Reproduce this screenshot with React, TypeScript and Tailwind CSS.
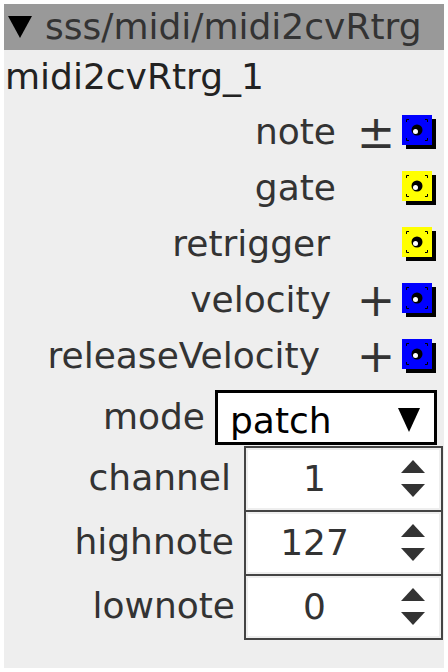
import React from "react";

const font = { fontFamily: '"DejaVu Sans", sans-serif' };

function Port({ color }: { color: "blue" | "yellow" }) {
  const fill = color === "blue" ? "#0000ff" : "#ffff00";
  return (
    <svg width="34" height="34" viewBox="0 0 34 34" className="block">
      <rect x="4" y="4" width="30" height="30" fill="#000" />
      <rect x="0" y="0" width="30" height="30" fill={fill} />
      <g fill="none" stroke="#000" strokeWidth="1">
        <path d="M4.5 7V4.5H7" />
        <path d="M23 4.5H25.5V7" />
        <path d="M4.5 23V25.5H7" />
        <path d="M23 25.5H25.5V23" />
      </g>
      <circle cx="15" cy="15" r="5.5" fill="#000" />
      <circle cx="13.5" cy="16.5" r="2.5" fill="#fff" />
    </svg>
  );
}

function PortRow({ label, sign, color, shift }: { label: string; sign: string; color: "blue" | "yellow"; shift: string }) {
  return (
    <div className="flex h-[56px] items-center justify-end pr-[8px]">
      <span className={`text-[36px] leading-none text-[#333] ${shift}`}>{label}</span>
      <span className="ml-[15px] flex w-[50px] justify-center text-[46px] leading-none text-[#333]">{sign}</span>
      <div className="ml-[1px]">
        <Port color={color} />
      </div>
    </div>
  );
}

function Spinner() {
  return (
    <svg width="24" height="38" viewBox="0 0 24 38" className="block">
      <polygon points="12,0 24,13 0,13" fill="#333" />
      <polygon points="0,24 24,24 12,37" fill="#333" />
    </svg>
  );
}

function NumRow({ label, value, pr }: { label: string; value: string; pr: string }) {
  return (
    <div className="flex h-[64px] items-center">
      <div className={`w-[240px] text-right text-[36px] leading-none text-[#333] ${pr}`}>{label}</div>
      <div className="-mb-[2px] flex h-[66px] w-[199px] border-2 border-[#444] bg-[#eee] p-[2px]">
        <div className="flex flex-1 items-center bg-white">
          <div className="flex-1 pl-[2px] text-center text-[36px] leading-none text-[#333]">{value}</div>
          <div className="flex w-[60px] justify-center pl-[8px]">
            <Spinner />
          </div>
        </div>
      </div>
    </div>
  );
}

export default function App() {
  return (
    <div className="h-[672px] w-[448px] bg-white p-[4px]" style={font}>
      <div className="h-[664px] w-[440px] bg-[#eeeeee]">
        <div className="flex h-[46px] items-center bg-[#999999] pl-[4px] text-[36px] leading-none text-[#333]">
          <svg width="24" height="22" viewBox="0 0 24 22" className="block">
            <polygon points="0,0 24,0 12,22" fill="#000" />
          </svg>
          <span className="ml-[13px]">sss/midi/midi2cvRtrg</span>
        </div>
        <div className="flex h-[54px] items-center pl-[1px] text-[36px] leading-none text-[#222]">midi2cvRtrg_1</div>
        <PortRow label="note" sign="±" color="blue" shift="mr-0" />
        <PortRow label="gate" sign="" color="yellow" shift="mr-0" />
        <PortRow label="retrigger" sign="" color="yellow" shift="mr-[6px]" />
        <PortRow label="velocity" sign="+" color="blue" shift="mr-[5px]" />
        <PortRow label="releaseVelocity" sign="+" color="blue" shift="mr-[16px]" />
        <div className="mt-[4px] flex h-[58px] items-center">
          <div className="w-[211px] pr-[10px] text-right text-[36px] leading-none text-[#333]">mode</div>
          <div className="flex h-[55px] w-[222px] items-end border-[3px] border-black bg-white pl-[12px] pr-[14px]">
            <span className="flex-1 text-[36px] leading-[42px] text-black">patch</span>
            <svg width="22" height="24" viewBox="0 0 22 24" className="mb-[10px] block">
              <polygon points="0,0 22,0 11,24" fill="#000" />
            </svg>
          </div>
        </div>
        <NumRow label="channel" value="1" pr="pr-[13px]" />
        <NumRow label="highnote" value="127" pr="pr-[10px]" />
        <NumRow label="lownote" value="0" pr="pr-[9px]" />
      </div>
    </div>
  );
}
